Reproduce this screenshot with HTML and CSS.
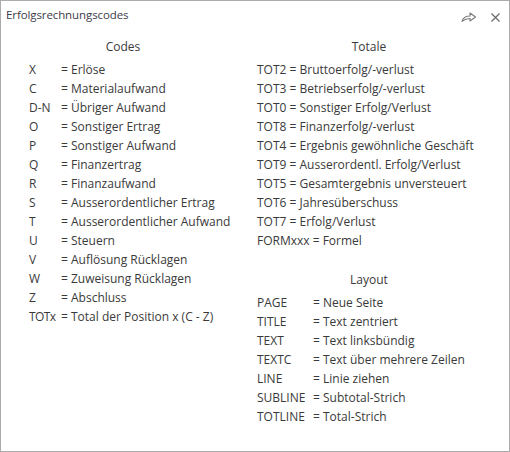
FILE: index.html
```html
<!DOCTYPE html>
<html>
<head>
<meta charset="utf-8">
<link rel="stylesheet" href="styles.css">
</head>
<body>
<div class="window">
  <div class="titlebar">
    <div class="title">Erfolgsrechnungscodes</div>
    <div class="actions">
      <svg class="icon share" width="16" height="10" viewBox="0 0 16 10"><path d="M1 9.3 C2 5.6 4.5 4 9 4 V1 L14.5 5 L9 9 V6.5 C5.5 6.5 3.3 7.5 1 9.3 Z" fill="none" stroke="#7a7a7a" stroke-width="1.1" stroke-linejoin="round"/></svg>
      <svg class="icon close" width="9" height="9" viewBox="0 0 9 9"><path d="M0.5 0.5 L8.5 8.5 M8.5 0.5 L0.5 8.5" stroke="#6a6a6a" stroke-width="1.2"/></svg>
    </div>
  </div>
  <div class="content">
    <div class="col col-left">
      <div class="head">Codes</div>
      <div class="list codes">
        <span class="code">X</span><span>= Erlöse</span>
        <span class="code">C</span><span>= Materialaufwand</span>
        <span class="code">D-N</span><span>= Übriger Aufwand</span>
        <span class="code">O</span><span>= Sonstiger Ertrag</span>
        <span class="code">P</span><span>= Sonstiger Aufwand</span>
        <span class="code">Q</span><span>= Finanzertrag</span>
        <span class="code">R</span><span>= Finanzaufwand</span>
        <span class="code">S</span><span>= Ausserordentlicher Ertrag</span>
        <span class="code">T</span><span>= Ausserordentlicher Aufwand</span>
        <span class="code">U</span><span>= Steuern</span>
        <span class="code">V</span><span>= Auflösung Rücklagen</span>
        <span class="code">W</span><span>= Zuweisung Rücklagen</span>
        <span class="code">Z</span><span>= Abschluss</span>
        <span class="code tight">TOTx</span><span>= Total der Position x (C - Z)</span>
      </div>
    </div>
    <div class="col col-right">
      <div class="head">Totale</div>
      <div class="plain">
        <div>TOT2 = Bruttoerfolg/-verlust</div>
        <div>TOT3 = Betriebserfolg/-verlust</div>
        <div>TOT0 = Sonstiger Erfolg/Verlust</div>
        <div>TOT8 = Finanzerfolg/-verlust</div>
        <div>TOT4 = Ergebnis gewöhnliche Geschäft</div>
        <div>TOT9 = Ausserordentl. Erfolg/Verlust</div>
        <div>TOT5 = Gesamtergebnis unversteuert</div>
        <div>TOT6 = Jahresüberschuss</div>
        <div>TOT7 = Erfolg/Verlust</div>
        <div>FORMxxx = Formel</div>
      </div>
      <div class="head head-gap">Layout</div>
      <div class="list layout">
        <span>PAGE</span><span>= Neue Seite</span>
        <span>TITLE</span><span>= Text zentriert</span>
        <span>TEXT</span><span>= Text linksbündig</span>
        <span>TEXTC</span><span>= Text über mehrere Zeilen</span>
        <span>LINE</span><span>= Linie ziehen</span>
        <span>SUBLINE</span><span>= Subtotal-Strich</span>
        <span>TOTLINE</span><span>= Total-Strich</span>
      </div>
    </div>
  </div>
</div>
</body>
</html>
```
FILE: styles.css
```css
html, body {
  margin: 0;
  padding: 0;
  background: #ffffff;
}
.window {
  width: 510px;
  height: 452px;
  box-sizing: border-box;
  border: 1px solid #ababab;
  background: #ffffff;
  font-family: "Open Sans", "Noto Sans", sans-serif;
  font-size: 12px;
  color: #3a3a3a;
}
.titlebar {
  height: 27px;
  display: flex;
  align-items: center;
  justify-content: space-between;
  padding: 0 9px 0 5px;
}
.title {
  font-size: 11.5px;
  letter-spacing: -0.1px;
  color: #3c3c4a;
}
.actions {
  display: flex;
  align-items: center;
  gap: 14px;
  margin-top: 5px;
}
.icon { display: block; }
.content {
  display: grid;
  grid-template-columns: 188px 224px;
  column-gap: 40px;
  padding: 9px 0 0 28px;
  line-height: 19px;
}
.head {
  text-align: center;
  margin-bottom: 4px;
}
.head-gap {
  margin-top: 20px;
}
.list {
  display: grid;
  white-space: nowrap;
}
.codes {
  grid-template-columns: 32px auto;
}
.tight {
  letter-spacing: -0.6px;
}
.layout {
  grid-template-columns: 56px auto;
}
.plain {
  white-space: nowrap;
}
```
